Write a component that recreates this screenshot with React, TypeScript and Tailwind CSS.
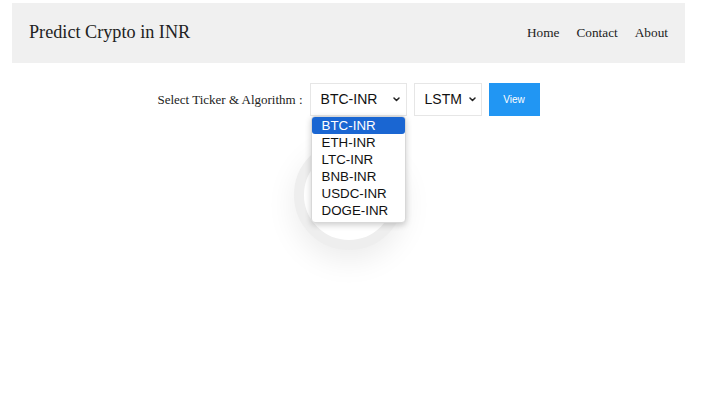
import React from "react";

const serif = { fontFamily: '"Liberation Serif", "Times New Roman", serif' };
const sans = { fontFamily: '"Liberation Sans", Arial, sans-serif' };

function Chevron() {
  return (
    <svg width="7" height="5" viewBox="0 0 7 5" className="shrink-0">
      <path d="M1 1 L3.5 3.5 L6 1" fill="none" stroke="#222" strokeWidth="1.5" strokeLinecap="round" strokeLinejoin="round" />
    </svg>
  );
}

const tickers = ["BTC-INR", "ETH-INR", "LTC-INR", "BNB-INR", "USDC-INR", "DOGE-INR"];

export default function App() {
  return (
    <div className="w-[702px] h-[400px] bg-white overflow-hidden">
      <div className="ml-3 pt-[3px] w-[673px]">
        <header className="h-[60px] bg-[#f0f0f0] flex items-center justify-between pl-[17px] pr-[17px]">
          <div className="text-[18.2px] text-[#222]" style={serif}>Predict Crypto in INR</div>
          <nav className="flex gap-[17px] text-[13.3px] text-[#222]" style={serif}>
            <span>Home</span>
            <span>Contact</span>
            <span>About</span>
          </nav>
        </header>

        <div className="mt-5 flex justify-center items-center gap-[7px]">
          <span className="text-[13px] text-[#222]" style={serif}>Select Ticker &amp; Algorithm :</span>
          <div className="relative z-10">
            <div className="w-[97px] h-[33px] border border-[#e6e6e6] bg-white flex items-center justify-between pl-[10px] pr-[6px] text-[14px] text-[#111]" style={sans}>
              <span>BTC-INR</span>
              <Chevron />
            </div>
            <div className="absolute left-[1px] top-full w-[95px] bg-white rounded-[4px] border border-[#d8d8d8] shadow-[0_2px_6px_rgba(0,0,0,0.2)] pb-[3px] text-[13.33px]" style={sans}>
              {tickers.map((t, i) => (
                <div
                  key={t}
                  className={
                    i === 0
                      ? "h-[17px] leading-[17px] pl-[10px] bg-[#1a66d2] text-white rounded-[3px]"
                      : "h-[17px] leading-[17px] pl-[10px] text-[#111]"
                  }
                >
                  {t}
                </div>
              ))}
            </div>
          </div>
          <div className="w-[68px] h-[33px] border border-[#e6e6e6] bg-white flex items-center justify-between pl-[10px] pr-[5px] text-[14px] text-[#111]" style={sans}>
            <span>LSTM</span>
            <Chevron />
          </div>
          <button className="w-[51px] h-[33px] bg-[#2196f3] text-white text-[10px]" style={sans}>View</button>
        </div>

        <div className="flex justify-center mt-6">
          <div className="w-[110px] h-[110px] rounded-full border-[10px] border-[#eeeeee] bg-white shadow-[0_10px_30px_rgba(0,0,0,0.08)]" />
        </div>
      </div>
    </div>
  );
}
